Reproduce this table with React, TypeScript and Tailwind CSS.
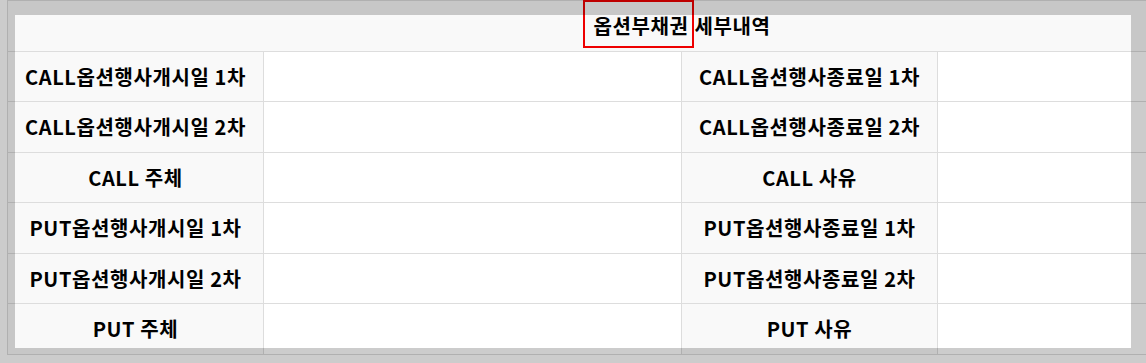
import React from "react";

const rows: { l: string; r: string; h: string }[] = [
  { l: "CALL옵션행사개시일 1차", r: "CALL옵션행사종료일 1차", h: "h-[50px]" },
  { l: "CALL옵션행사개시일 2차", r: "CALL옵션행사종료일 2차", h: "h-[51px]" },
  { l: "CALL 주체", r: "CALL 사유", h: "h-[50px]" },
  { l: "PUT옵션행사개시일 1차", r: "PUT옵션행사종료일 1차", h: "h-[51px]" },
  { l: "PUT옵션행사개시일 2차", r: "PUT옵션행사종료일 2차", h: "h-[50px]" },
  { l: "PUT 주체", r: "PUT 사유", h: "h-[51px]" },
];

export default function App() {
  return (
    <div
      className="relative w-[1146px] h-[363px] overflow-hidden bg-white text-black"
      style={{ fontFamily: '"Noto Sans CJK KR", "Noto Sans", sans-serif' }}
    >
      <div className="ml-[7px] w-[1349px] border-l border-t border-[#dddddd]">
        <div className="relative flex h-[51px] items-center justify-center border-b border-[#dddddd] bg-[#f9f9f9] text-[20px] font-bold tracking-[0.6px]">
          <span>옵션부채권</span>
          <span className="ml-[6px]">세부내역</span>
          <span className="pointer-events-none absolute left-[575px] top-[-1px] h-[48px] w-[111px] border-[2px] border-[#ee0000]" />
        </div>
        {rows.map((r, i) => (
          <div key={i} className={`flex ${r.h} border-b border-[#dddddd]`}>
            <div className="flex w-[256px] shrink-0 items-center justify-center whitespace-pre border-r border-[#dddddd] bg-[#f9f9f9] text-[20px] font-bold tracking-[0.6px]">
              {r.l}
            </div>
            <div className="w-[418px] shrink-0 border-r border-[#dddddd] bg-white" />
            <div className="flex w-[256px] shrink-0 items-center justify-center whitespace-pre border-r border-[#dddddd] bg-[#f9f9f9] text-[20px] font-bold tracking-[0.6px]">
              {r.r}
            </div>
            <div className="w-[418px] shrink-0 bg-white" />
          </div>
        ))}
      </div>
      <div className="pointer-events-none absolute left-[15px] top-[15px] h-[333px] w-[1116px] shadow-[0_0_0_2000px_rgba(0,0,0,0.2)]" />
    </div>
  );
}
